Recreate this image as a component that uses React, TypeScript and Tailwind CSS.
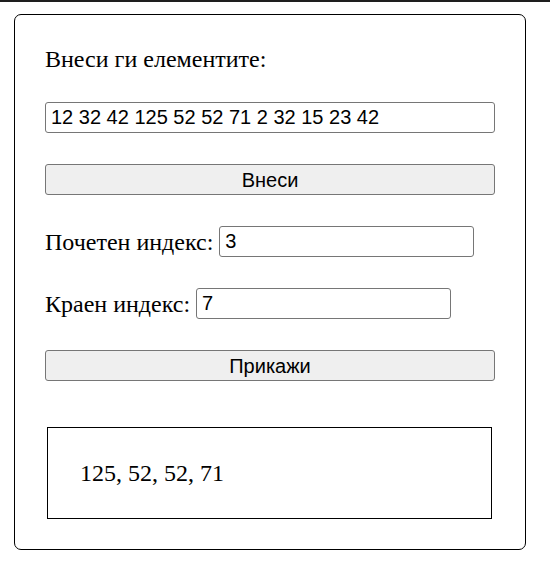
export default function App() {
    const serif = { fontFamily: '"Liberation Serif", "Times New Roman", serif' };

    return (
        <div className="min-h-[566px] bg-white">
            {/* Top edge */}
            <div className="h-[2px] bg-[#1e1e1e]"></div>

            <div className="px-[14px] pt-[12px]">
                {/* Card */}
                <div className="w-[512px] border border-black rounded-[7px] p-[30px] text-black">
                    <div className="text-[24px] leading-[28px] mb-[29px]" style={serif}>
                        Внеси ги елементите:
                    </div>

                    <input
                        type="text"
                        defaultValue="12 32 42 125 52 52 71 2 32 15 23 42"
                        className="block w-full h-[31px] px-[5px] border border-[#767676] rounded-[3px] text-[20px] font-['Liberation_Sans',Arial,sans-serif] text-black outline-none"
                    />

                    <button className="block w-full h-[31px] mt-[31px] bg-[#efefef] border border-[#767676] rounded-[3px] text-[20px] font-['Liberation_Sans',Arial,sans-serif] text-black">
                        Внеси
                    </button>

                    {/* Start index */}
                    <div className="flex items-center h-[31px] mt-[31px]">
                        <span className="text-[24px] leading-[28px] mr-[6px]" style={serif}>
                            Почетен индекс:
                        </span>
                        <input
                            type="text"
                            defaultValue="3"
                            className="w-[255px] h-[31px] px-[5px] border border-[#767676] rounded-[3px] text-[20px] font-['Liberation_Sans',Arial,sans-serif] text-black outline-none"
                        />
                    </div>

                    {/* End index */}
                    <div className="flex items-center h-[31px] mt-[31px]">
                        <span className="text-[24px] leading-[28px] mr-[6px]" style={serif}>
                            Краен индекс:
                        </span>
                        <input
                            type="text"
                            defaultValue="7"
                            className="w-[255px] h-[31px] px-[5px] border border-[#767676] rounded-[3px] text-[20px] font-['Liberation_Sans',Arial,sans-serif] text-black outline-none"
                        />
                    </div>

                    <button className="block w-full h-[31px] mt-[31px] bg-[#efefef] border border-[#767676] rounded-[3px] text-[20px] font-['Liberation_Sans',Arial,sans-serif] text-black">
                        Прикажи
                    </button>

                    {/* Result */}
                    <div className="ml-[2px] w-[445px] h-[92px] mt-[46px] border border-black flex items-center pl-[32px]">
                        <span className="text-[24px] leading-[28px]" style={serif}>
                            125, 52, 52, 71
                        </span>
                    </div>
                </div>
            </div>
        </div>
    );
}
